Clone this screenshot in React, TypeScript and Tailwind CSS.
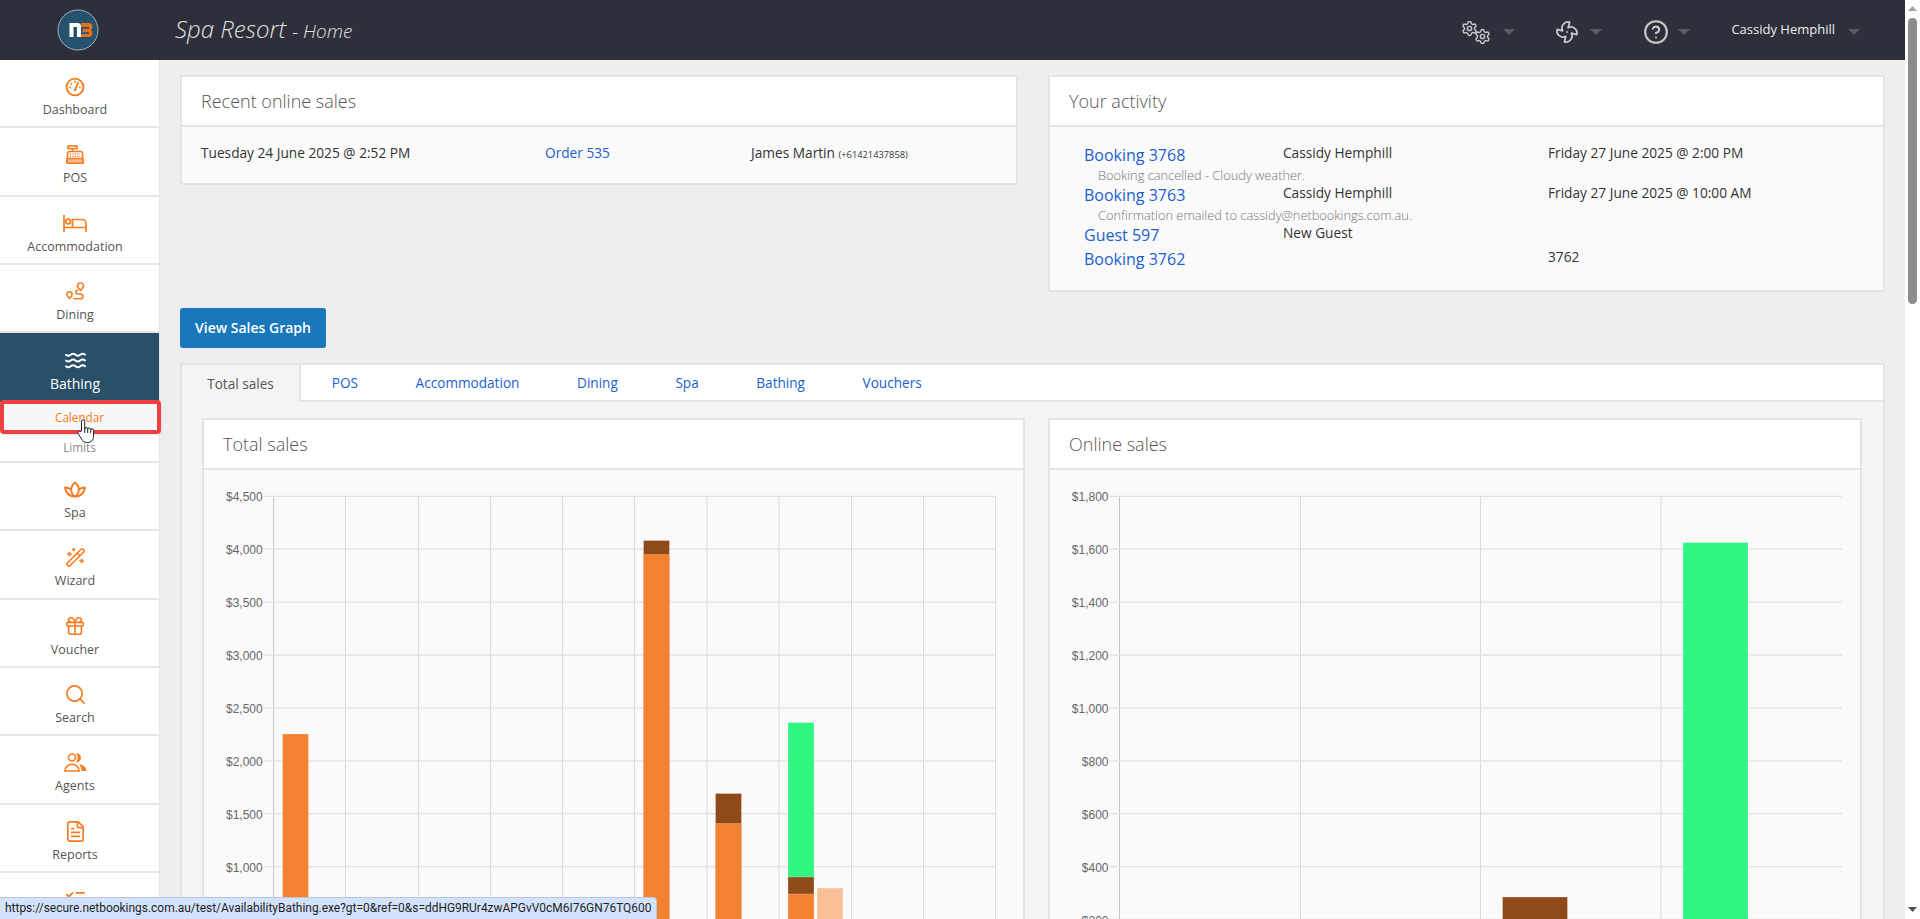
import { CircleHelp, Fan, Gift, ListChecks, FileText, Search, Settings, WandSparkles, Waves } from 'lucide-react';
import type { ReactNode } from 'react';

const ORANGE = '#f57c20';

function GaugeIcon() {
  return (
    <svg width="20" height="20" viewBox="0 0 20 20" fill="none" stroke={ORANGE} strokeWidth="1.9" strokeLinecap="round">
      <circle cx="10" cy="10" r="8.4" />
      <path d="M13 5.500 10.600 12" />
      <circle cx="10.200" cy="13" r="1.200" fill={ORANGE} stroke="none" />
      <path d="M5 10.500h.1M6.200 6.800h.1M10 4.800h.1M14.800 10.500h.1" />
    </svg>
  );
}

function PosIcon() {
  return (
    <svg width="18" height="19" viewBox="0 0 18 19" fill="none" stroke={ORANGE} strokeWidth="1.6">
      <rect x="2" y="1" width="9" height="2.600" />
      <path d="M6.500 3.600V6.500" />
      <path d="M1.500 13.500V8.500a2 2 0 0 1 2-2h11a2 2 0 0 1 2 2v5" />
      <rect x="0.800" y="13.500" width="16.400" height="4.700" rx="0.800" fill="#f9b98a" />
      <path d="M4 9h10M4 11.400h10" strokeDasharray="1.200 1.200" strokeWidth="1.300" />
    </svg>
  );
}

function BedIcon() {
  return (
    <svg width="24" height="17" viewBox="0 0 24 17" fill="none" stroke={ORANGE} strokeWidth="1.7">
      <path d="M1 0v17M1 12.500h22M23 17V8.500a4 4 0 0 0-4-4H9.500v8" />
      <circle cx="5.200" cy="6.500" r="2.400" />
    </svg>
  );
}

function RouteIcon() {
  return (
    <svg width="19" height="18" viewBox="0 0 19 18" fill="none" stroke={ORANGE} strokeWidth="1.6" strokeLinecap="round">
      <path d="M14.500 1a3 3 0 0 1 3 3c0 1.700-3 4.400-3 4.400S11.500 5.700 11.500 4a3 3 0 0 1 3-3z" />
      <path d="M3.500 9.800a2.600 2.600 0 0 1 2.600 2.600c0 1.500-2.600 3.900-2.600 3.900S.9 13.900.9 12.400a2.600 2.600 0 0 1 2.600-2.600z" />
      <path d="M8 16.800h6.500a2.400 2.400 0 0 0 0-4.800h-2.800a1.900 1.900 0 0 1 0-3.800" />
    </svg>
  );
}

function LotusIcon() {
  return (
    <svg width="22" height="17" viewBox="0 0 22 17" fill="none" stroke={ORANGE} strokeWidth="1.9" strokeLinejoin="round">
      <path d="M11 1.500c2.500 2 3.800 4.500 3.800 7 0 3.500-2 6.500-3.800 7-1.800-.5-3.800-3.500-3.800-7 0-2.500 1.300-5 3.800-7z" />
      <path d="M11 15.500C6 15.500 2 12.500 1 6.500c2 0 4.200.6 6.300 2" />
      <path d="M11 15.500c5 0 9-3 10-9-2 0-4.200.6-6.300 2" />
    </svg>
  );
}

function AgentsIcon() {
  return (
    <svg width="23" height="19" viewBox="0 0 23 19" fill="none" stroke={ORANGE} strokeWidth="1.6">
      <circle cx="8" cy="4.500" r="3.500" />
      <path d="M1 18c0-4 3-6.800 7-6.800s7 2.800 7 6.800z" />
      <path d="M13.500 1.200a3.800 3.800 0 0 1 0 7.200c1.200-2.200 1.200-5 0-7.200z" fill={ORANGE} />
      <path d="M15 11.300c4 0 7 2.800 7.500 6.700h-5c0-2.600-1-5-2.500-6.700z" fill={ORANGE} stroke="none" />
    </svg>
  );
}

function HandCursor() {
  return (
    <svg
      width="18"
      height="24"
      viewBox="0 0 18 24"
      className="absolute left-[77px] top-[17px] z-20"
      fill="#fff"
      stroke="#222"
      strokeWidth="1"
    >
      <path d="M4.500 12V2.500a1.600 1.600 0 0 1 3.200 0v7.500a1.500 1.500 0 0 1 3 0v.5a1.500 1.500 0 0 1 3 0v.7a1.400 1.400 0 0 1 2.800 0V17.500c0 3.500-2.300 6-6 6-3 0-4.700-1-6-3.500L.9 14c-.8-1.500 1-2.600 2.200-1.400z" />
      <path d="M7.700 10v4M10.700 10.500v3.500M13.700 11.200v3" />
    </svg>
  );
}

function Logo() {
  return (
    <svg width="42" height="42" viewBox="0 0 42 42">
      <circle cx="21" cy="21" r="20" fill="#26526d" stroke="#a5b0b8" strokeWidth="1" />
      <path d="M12.500 28V14h8a3.500 3.500 0 0 1 3.500 3.500V28h-4V18h-3.500v10z" fill="#fff" />
      <path
        d="M24 14h7.500c2.700 0 4 1.500 4 3.600 0 1.500-.6 2.700-1.600 3.400 1 .7 1.600 1.900 1.600 3.400 0 2.100-1.300 3.600-4 3.600H24v-3h7.200a.9.9 0 0 0 0-1.800H25.500v-3.400h5.700a.9.9 0 0 0 0-1.800H24z"
        fill="#e8701c"
      />
    </svg>
  );
}

function Caret() {
  return <span className="h-0 w-0 border-x-[6px] border-t-[6px] border-x-transparent border-t-[#585c64]" />;
}

function SideItem({ icon, label }: { icon: ReactNode; label?: string }) {
  return (
    <a className="flex h-[68.3px] flex-col items-center border-b-2 border-[#e8e4ea] pr-[9px] pt-[15px] text-[12.5px] leading-[18px] text-[#555]">
      <span className="flex h-[23px] items-center justify-center">{icon}</span>
      {label && <span className="mt-[3px]">{label}</span>}
    </a>
  );
}

function Sidebar() {
  return (
    <nav className="w-[160px] shrink-0 border-r border-[#e4e4e4] bg-white">
      <SideItem icon={<GaugeIcon />} label="Dashboard" />
      <SideItem icon={<PosIcon />} label="POS" />
      <SideItem icon={<BedIcon />} label="Accommodation" />
      <SideItem icon={<RouteIcon />} label="Dining" />
      <a className="flex h-[69px] flex-col items-center bg-[#2a5069] pr-[9px] pt-[16px] text-sm leading-5 text-white">
        <span className="flex h-[23px] items-center">
          <Waves size={23} color="#fff" strokeWidth={2} />
        </span>
        <span className="mt-[2px]">Bathing</span>
      </a>
      <div className="border-b-2 border-[#e8e4ea]">
        <a className="relative flex h-[31px] items-center justify-center bg-[#f8f8f8] text-[11.7px] text-[#f57c20]">
          Calendar
          <span className="absolute -top-[2px] left-0 z-10 h-[34px] w-[161px] rounded-[4px] border-4 border-[#ee4042] shadow-sm" />
          <HandCursor />
        </a>
        <a className="flex h-[28px] justify-center pt-[6px] text-[11.7px] leading-[16px] text-[#8a8a8a]">Limits</a>
      </div>
      <SideItem icon={<LotusIcon />} label="Spa" />
      <SideItem icon={<WandSparkles size={21} color={ORANGE} strokeWidth={1.8} />} label="Wizard" />
      <SideItem icon={<Gift size={22} color={ORANGE} strokeWidth={1.8} />} label="Voucher" />
      <SideItem icon={<Search size={23} color={ORANGE} strokeWidth={1.8} />} label="Search" />
      <SideItem icon={<AgentsIcon />} label="Agents" />
      <SideItem icon={<FileText size={23} color={ORANGE} strokeWidth={1.8} />} label="Reports" />
      <SideItem icon={<ListChecks size={23} color={ORANGE} strokeWidth={1.8} />} />
    </nav>
  );
}

function Header() {
  return (
    <header className="flex h-[60px] shrink-0 items-center bg-[#2d2f3b] text-[#c9c9c9]">
      <div className="flex w-[156px] justify-center">
        <Logo />
      </div>
      <div className="mb-[2px] ml-[19px] flex items-baseline font-light text-[#e0e0e0] italic">
        <span className="text-[24px]">Spa Resort</span>
        <span className="ml-[6px] text-[19px]">- Home</span>
      </div>
      <div className="ml-auto flex items-center pr-[45px]">
        <svg width="29" height="23" viewBox="0 0 29 23" className="mt-[4px]">
          <Settings x={-1} y={-1} width={17} height={17} strokeWidth={2} color="#c9c9c9" />
          <Settings x={12} y={7} width={17} height={17} strokeWidth={2} color="#c9c9c9" />
        </svg>
        <span className="ml-[12px] mt-[3px] flex"><Caret /></span>
        <Fan size={24} strokeWidth={1.8} className="ml-[40px] mt-[4px]" />
        <span className="ml-[11px] mt-[3px] flex"><Caret /></span>
        <CircleHelp size={26} strokeWidth={1.9} className="ml-[41px] mt-[4px]" />
        <span className="ml-[9px] mt-[3px] flex"><Caret /></span>
        <span className="ml-[41px] text-[13px] text-[#eee]">Cassidy Hemphill</span>
        <span className="ml-[13px] mt-[3px] flex"><Caret /></span>
      </div>
    </header>
  );
}

function Panel({ title, children }: { title: string; children: ReactNode }) {
  return (
    <section className="border-2 border-[#e4e4e4] bg-[#fafafa]">
      <h2 className="flex h-[50px] items-center border-b-2 border-[#e4e4e4] bg-white px-[19px] text-lg font-light text-[#555]">
        {title}
      </h2>
      {children}
    </section>
  );
}

const LINK = 'text-[#1a5fd0]';

function ActivityRow({ link, who, when, note }: { link: string; who?: string; when?: string; note?: string }) {
  return (
    <div>
      <div className="flex items-start">
        <a className={`w-[199px] text-base leading-5 ${LINK}`}>{link}</a>
        <span className="w-[265px] text-[13.7px] leading-4 text-[#333]">{who}</span>
        <span className="text-[13.7px] leading-4 text-[#333]">{when}</span>
      </div>
      {note && <p className="h-5 pl-[14px] text-[12.8px] leading-5 font-light text-[#777]">{note}</p>}
    </div>
  );
}

type Bar = { x: number; w: number; top: number; color: string };

function Chart({
  width,
  originX,
  labels,
  xLines,
  right,
  bars,
}: {
  width: number;
  originX: number;
  labels: string[];
  xLines: number[];
  right: number;
  bars: Bar[];
}) {
  const toX = (x: number) => x - originX;
  const toY = (y: number) => y - 470;
  const axis = xLines[0];
  const rows = labels.map((label, i) => ({ label, y: 496.3 + 52.9 * i }));
  return (
    <svg width={width} height={460} className="block">
      {xLines.map((x, i) => (
        <line key={x} x1={toX(x)} x2={toX(x)} y1={toY(496)} y2={460} stroke={i === 0 ? '#c4c4c4' : '#dadada'} />
      ))}
      {rows.map(r => (
        <g key={r.label}>
          <line x1={toX(axis - 10)} x2={toX(right)} y1={toY(r.y)} y2={toY(r.y)} stroke="#e2e2e2" strokeWidth="1.3" />
          <text
            x={toX(axis - 11)}
            y={toY(r.y) + 5}
            textAnchor="end"
            fontFamily="'Liberation Sans', Arial, sans-serif"
            fontSize="12"
            fill="#666"
          >
            {r.label}
          </text>
        </g>
      ))}
      {bars.map(b => (
        <rect
          key={`${b.x}-${b.top}`}
          x={toX(b.x)}
          y={toY(b.top)}
          width={b.w}
          height={460}
          fill={b.color}
          stroke="#fff"
          strokeOpacity="0.25"
        />
      ))}
    </svg>
  );
}

const C_ORANGE = '#f28130';
const C_BROWN = '#8f4a1a';
const C_GREEN = '#30f580';
const C_LIGHT = '#f9c097';

const totalBars: Bar[] = [
  { x: 282.5, w: 26, top: 734, color: C_ORANGE },
  { x: 643.5, w: 26, top: 540.5, color: C_BROWN },
  { x: 643.5, w: 26, top: 554.5, color: C_ORANGE },
  { x: 715.5, w: 26, top: 793.5, color: C_BROWN },
  { x: 715.5, w: 26, top: 823.5, color: C_ORANGE },
  { x: 788, w: 26, top: 722.5, color: C_GREEN },
  { x: 788, w: 26, top: 877, color: C_BROWN },
  { x: 788, w: 26, top: 894, color: C_ORANGE },
  { x: 817, w: 26, top: 888, color: C_LIGHT },
];

const onlineBars: Bar[] = [
  { x: 1502.5, w: 65, top: 897, color: C_BROWN },
  { x: 1683, w: 65, top: 542.5, color: C_GREEN },
];

const tabs = ['POS', 'Accommodation', 'Dining', 'Spa', 'Bathing', 'Vouchers'];

function Main() {
  return (
    <main className="min-w-0 flex-1 bg-[#eeeeee] pl-[20px] pr-[20px] pt-[15px]">
      <div className="grid grid-cols-[838px_837px] items-start gap-[30px]">
        <Panel title="Recent online sales">
          <div className="flex h-[56px] pl-[19px] pt-[16px] text-[13.7px] leading-5 text-[#333]">
            <span className="w-[344px]">Tuesday 24 June 2025 @ 2:52 PM</span>
            <a className={`w-[206px] ${LINK}`}>Order 535</a>
            <span>
              James Martin <small className="text-[9.3px]">(+61421437858)</small>
            </span>
          </div>
        </Panel>
        <Panel title="Your activity">
          <div className="h-[163px] pl-[34px] pt-[18px]">
            <ActivityRow
              link="Booking 3768"
              who="Cassidy Hemphill"
              when="Friday 27 June 2025 @ 2:00 PM"
              note="Booking cancelled - Cloudy weather."
            />
            <ActivityRow
              link="Booking 3763"
              who="Cassidy Hemphill"
              when="Friday 27 June 2025 @ 10:00 AM"
              note="Confirmation emailed to cassidy@netbookings.com.au."
            />
            <ActivityRow link="Guest 597" who="New Guest" />
            <div className="mt-[4px]">
              <ActivityRow link="Booking 3762" when="3762" />
            </div>
          </div>
        </Panel>
      </div>

      <button className="mt-[16px] block h-[40px] w-[146px] rounded-[3px] bg-[#1878bb] text-sm font-semibold text-white">
        View Sales Graph
      </button>

      <div className="mt-[15px] border-2 border-[#e4e4e4] bg-[#f4f4f4]">
        <div className="flex h-[37px] border-b-2 border-[#e4e4e4] bg-white text-[13.6px]">
          <span className="-mb-[2px] mr-[2px] flex h-[37px] w-[119px] items-center justify-center border-r-2 border-[#e4e4e4] bg-[#f4f4f4] pt-[1px] text-[#555]">
            Total sales
          </span>
          {tabs.map(t => (
            <a key={t} className={`flex items-center px-[28.8px] pt-[1px] ${LINK}`}>
              {t}
            </a>
          ))}
        </div>
        <div className="grid grid-cols-[823px_814px] gap-[23px] pl-[20px] pt-[16px]">
          <Panel title="Total sales">
            <Chart
              width={819}
              originX={204}
              labels={['$4,500', '$4,000', '$3,500', '$3,000', '$2,500', '$2,000', '$1,500', '$1,000']}
              xLines={[273.7, 345.5, 418.5, 490.5, 562.5, 634.5, 707, 779, 851.5, 923.5, 995.5]}
              right={995.5}
              bars={totalBars}
            />
          </Panel>
          <Panel title="Online sales">
            <Chart
              width={810}
              originX={1050}
              labels={['$1,800', '$1,600', '$1,400', '$1,200', '$1,000', '$800', '$600', '$400', '$200']}
              xLines={[1119.5, 1300.5, 1480.5, 1661]}
              right={1842}
              bars={onlineBars}
            />
          </Panel>
        </div>
      </div>
    </main>
  );
}

function Scrollbar() {
  return (
    <div className="flex w-[15px] shrink-0 flex-col items-center bg-[#fdfdfd]">
      <svg width="9" height="5" viewBox="0 0 9 5" className="mt-[6px]">
        <path d="M4.500 0 9 5H0z" fill="#a3a3a3" />
      </svg>
      <div className="mt-[7px] h-[286px] w-[9px] rounded-full bg-[#8c8c8c]" />
      <svg width="9" height="5" viewBox="0 0 9 5" className="mb-[7px] mt-auto">
        <path d="M0 0h9L4.500 5z" fill="#505050" />
      </svg>
    </div>
  );
}

export default function App() {
  return (
    <div className="relative flex h-screen overflow-hidden font-['Open_Sans',sans-serif]">
      <div className="flex min-w-0 flex-1 flex-col">
        <Header />
        <div className="flex min-h-0 flex-1">
          <Sidebar />
          <Main />
        </div>
      </div>
      <Scrollbar />
      <div className="absolute bottom-0 left-0 z-30 flex h-[22px] w-[657px] items-center whitespace-nowrap rounded-tr-[4px] border-r border-t border-[#b9c6da] bg-[#d3e3fd] pl-[5px] font-['Roboto',sans-serif] text-[11.95px] text-[#1f1f1f]">
        https://secure.netbookings.com.au/test/AvailabilityBathing.exe?gt=0&amp;ref=0&amp;s=ddHG9RUr4zwAPGvV0cM6I76GN76TQ600
      </div>
    </div>
  );
}
